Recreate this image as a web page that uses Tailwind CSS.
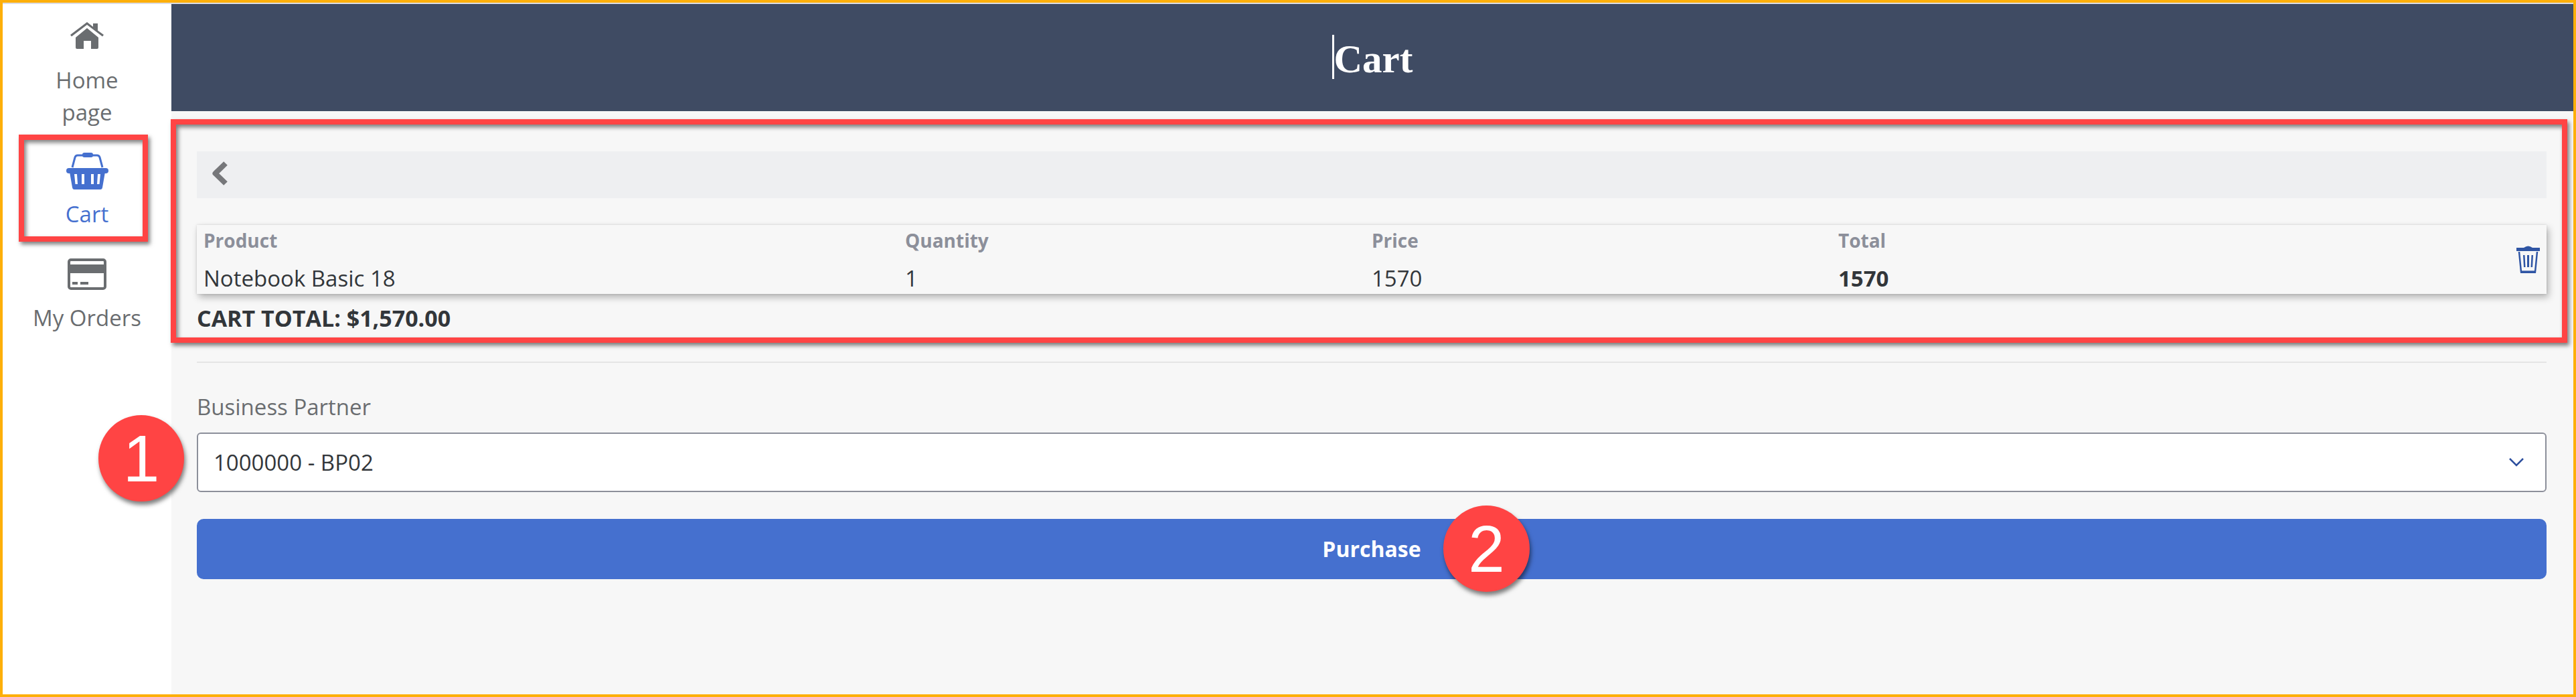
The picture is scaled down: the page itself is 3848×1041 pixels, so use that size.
<!DOCTYPE html>
<html lang="en">
<head>
  <meta charset="UTF-8">
  <title>Cart</title>
  <script src="https://cdn.jsdelivr.net/npm/@tailwindcss/browser@4"></script>
</head>
<body class="font-['Open_Sans','Noto_Sans',sans-serif]">
  <div class="relative w-[3848px] h-[1041px] overflow-hidden border-4 border-[#fdaf0a] bg-white">
    <div class="flex h-full border-t-2 border-[#dcdde3]">

      <!-- sidebar -->
      <nav class="w-[252px] shrink-0 bg-white text-[33px] leading-[48px] text-[#6a6d70] text-center">
        <a class="flex flex-col items-center pt-[27px]">
          <svg class="w-[50px] h-[40px]" viewBox="0 0 50 40" fill="#6a6d70">
            <path d="M0 19 25 0l9 7V2h7v10.500L50 19l-2 2.500L25 4 2 21.500z"/>
            <path d="M8 23 25 9l17 14v15q0 2-2 2H31V28H20v12H10q-2 0-2-2z"/>
          </svg>
          <span class="w-[120px] mt-[23px]">Home page</span>
        </a>
        <a class="flex flex-col items-center mt-[35px] text-[#4570cf]">
          <svg class="w-[63px] h-[56px]" viewBox="0 0 63 56" fill="#4570cf">
            <path d="M9 23 13 8q1-3 4-3h29q3 0 4 3l4 15" fill="none" stroke="#4570cf" stroke-width="3"/>
            <rect x="24" y="1" width="16" height="7" rx="3"/>
            <rect x="0" y="24" width="63" height="8" rx="4"/>
            <path fill-rule="evenodd" d="M5 30H58L54 53q-.5 3-3 3H12q-2.500 0-3-3zM12 33l1.500 15h3.500L16 33zM23 33v15h4V33zM37 33v15h4V33zM47 33l-1 15h3.500L51 33z"/>
          </svg>
          <span class="mt-[13px]">Cart</span>
        </a>
        <a class="flex flex-col items-center mt-[42px]">
          <svg class="w-[58px] h-[47px]" viewBox="0 0 58 47" fill="#6a6d70">
            <rect x="2" y="2" width="54" height="43" rx="3" fill="none" stroke="#6a6d70" stroke-width="4"/>
            <rect x="2" y="9" width="54" height="13"/>
            <rect x="7" y="35" width="8" height="4"/>
            <rect x="19" y="35" width="12" height="4"/>
          </svg>
          <span class="mt-[18px]">My Orders</span>
        </a>
      </nav>

      <!-- main -->
      <main class="flex-1 bg-[#f7f7f7]">
        <header class="h-[160px] bg-[#3f4b63] flex items-center justify-center pt-[4px]">
          <h1 class="relative ml-[3px] font-['Liberation_Serif',serif] font-bold text-[59px] leading-none text-white">
            <span class="absolute left-[-3px] top-[-7px] h-[66px] w-[3px] bg-white"></span>Cart
          </h1>
        </header>

        <div class="pl-[38px] pr-[40px] pt-[60px]">
          <div class="h-[70px] bg-[#eeeff1] flex items-center pl-[23px] pb-[4px]">
            <svg class="w-[23px] h-[36px]" viewBox="0 0 23 36" fill="none" stroke="#76777a" stroke-width="8" stroke-linejoin="round">
              <path d="M20 3 4.500 18 20 33"/>
            </svg>
          </div>

          <div class="mt-[40px] h-[103px] pl-[10px] bg-[#f7f7f7] shadow-[0_0_3px_rgba(0,0,0,0.12),3px_5px_10px_rgba(0,0,0,0.28)] grid grid-cols-[1048px_697px_697px_1fr_52px] grid-rows-[44px_59px] text-[33px]">
            <div class="self-center font-bold text-[28px] text-[#8c8f9a] pt-[1px]">Product</div>
            <div class="self-center font-bold text-[28px] text-[#8c8f9a] pt-[1px]">Quantity</div>
            <div class="self-center font-bold text-[28px] text-[#8c8f9a] pt-[1px]">Price</div>
            <div class="self-center font-bold text-[28px] text-[#8c8f9a] pt-[1px]">Total</div>
            <div class="row-span-2 pt-[31px] pl-[7px]">
              <svg class="w-[35px] h-[41px]" viewBox="0 0 35 41" fill="#2f55a4">
                <path d="M11 3q6.500-5 13 0z"/>
                <rect x="0" y="3" width="35" height="5"/>
                <path d="M4 9l3 30h21l3-30" fill="none" stroke="#2f55a4" stroke-width="2.500"/>
                <rect x="6" y="37.500" width="23" height="3.500"/>
                <path d="M10 14h2.500l1 18H11zM16 14h3v18h-3zM22.500 14H25l-1 18h-2.500z"/>
              </svg>
            </div>
            <div class="pt-[12px] leading-[47px] text-[#32363a]">Notebook Basic 18</div>
            <div class="pt-[12px] leading-[47px] text-[#32363a]">1</div>
            <div class="pt-[12px] leading-[47px] text-[#32363a]">1570</div>
            <div class="pt-[12px] leading-[47px] text-[#32363a] font-bold">1570</div>
          </div>

          <p class="mt-[15px] text-[34px] leading-[42px] font-bold text-[#32363a]">CART TOTAL: $1,570.00</p>

          <hr class="mt-[44px] border-t-2 border-[#e5e5e5]">

          <label class="block mt-[46px] text-[33px] leading-[40px] text-[#6a6d70]">Business Partner</label>
          <div class="mt-[18px] h-[89px] bg-white border-2 border-[#8c8f9a] rounded-[6px] flex items-center justify-between pl-[23px] pr-[32px] text-[33px] text-[#32363a]">
            <span>1000000 - BP02</span>
            <svg class="w-[22px] h-[13px]" viewBox="0 0 22 13" fill="none" stroke="#2d4f9e" stroke-width="2.500"><path d="M1 1l10 10L21 1"/></svg>
          </div>

          <button class="mt-[40px] w-full h-[90px] rounded-[10px] bg-[#4570cf] text-white font-bold text-[32px]">Purchase</button>
        </div>
      </main>
    </div>

    <!-- annotations laid over the screenshot -->
    <div class="absolute left-[24px] top-[197px] w-[193px] h-[160px] border-8 border-[#ff4444] shadow-[3px_4px_6px_rgba(0,0,0,0.5),inset_3px_4px_6px_rgba(0,0,0,0.5)]"></div>
    <div class="absolute left-[251px] top-[174px] w-[3580px] h-[334px] border-8 border-[#ff4444] shadow-[3px_4px_6px_rgba(0,0,0,0.5),inset_3px_4px_6px_rgba(0,0,0,0.5)]"></div>
    <div class="absolute left-[143px] top-[616px] w-[128px] h-[129px] rounded-full bg-[#ff4444] shadow-[2px_5px_6px_rgba(0,0,0,0.5)] flex items-center justify-center font-['Liberation_Sans',sans-serif] text-[98px] leading-none text-white">1</div>
    <div class="absolute left-[2152px] top-[751px] w-[129px] h-[129px] rounded-full bg-[#ff4444] shadow-[2px_5px_6px_rgba(0,0,0,0.5)] flex items-center justify-center font-['Liberation_Sans',sans-serif] text-[98px] leading-none text-white">2</div>
  </div>
</body>
</html>
